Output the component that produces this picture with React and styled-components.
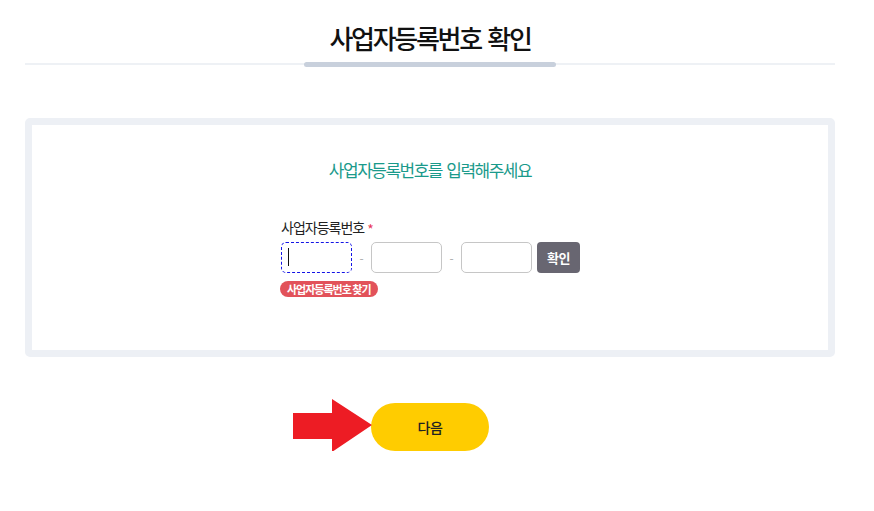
import React from "react";
import styled, { createGlobalStyle } from "styled-components";

const Global = createGlobalStyle`
  html, body { margin: 0; padding: 0; background: #fff; }
  body { font-family: "Noto Sans CJK KR", "Noto Sans", sans-serif; color: #222; }
  * { box-sizing: border-box; }
`;

const Page = styled.div`
  width: 874px;
  padding: 0 39px 0 25px;
`;

const TitleBlock = styled.header`
  display: flex;
  flex-direction: column;
  align-items: center;
  padding-top: 20px;
`;

const Title = styled.h1`
  margin: 0;
  font-size: 26px;
  line-height: 36px;
  font-weight: 500;
  letter-spacing: -2.3px;
  word-spacing: 3px;
  color: #111;
  height: 42px;
`;

const Rule = styled.div`
  width: 100%;
  height: 2px;
  margin-top: 1px;
  background: #eef1f5;
  display: flex;
  justify-content: center;
  align-items: center;
`;

const RuleAccent = styled.div`
  width: 252px;
  height: 5px;
  border-radius: 3px;
  background: #c8d0dc;
`;

const Card = styled.section`
  margin-top: 53px;
  height: 239px;
  border: 7px solid #edf0f5;
  border-radius: 5px;
  display: flex;
  flex-direction: column;
  align-items: center;
  padding-top: 32px;
`;

const Lead = styled.h2`
  margin: 0;
  font-size: 17px;
  line-height: 26px;
  font-weight: 400;
  letter-spacing: -1.5px;
  word-spacing: 2px;
  color: #1a9a8b;
`;

const Form = styled.div`
  margin-top: 33px;
  margin-left: 1px;
  display: flex;
  flex-direction: column;
  align-items: flex-start;
`;

const Label = styled.label`
  font-size: 14px;
  line-height: 18px;
  letter-spacing: -1px;
  color: #222;
  display: flex;
  align-items: center;
`;

const Req = styled.span`
  color: #e8395a;
  font-size: 14px;
  margin-left: 3px;
  margin-top: 4px;
  letter-spacing: 0;
`;

const Row = styled.div`
  margin-top: 4px;
  display: flex;
  align-items: center;
`;

const Field = styled.div`
  position: relative;
  width: 71px;
  height: 31px;
`;

const Input = styled.input`
  width: 100%;
  height: 100%;
  border-radius: 5px;
  border: 1px ${p => (p.$focused ? "dashed #1414e6" : "solid #c6c6c6")};
  outline: none;
  background: #fff;
  padding: 0 6px;
  font-size: 14px;
`;

const Caret = styled.span`
  position: absolute;
  left: 7px;
  top: 6px;
  width: 1px;
  height: 18px;
  background: #111;
`;

const Dash = styled.span`
  width: 19px;
  text-align: center;
  color: #aaa;
  font-size: 12px;
`;

const CheckButton = styled.button`
  margin-left: 5px;
  width: 43px;
  height: 31px;
  border: 0;
  border-radius: 4px;
  background: #686671;
  color: #fff;
  font-family: inherit;
  font-size: 13px;
  font-weight: 700;
  letter-spacing: -0.5px;
  padding: 0;
`;

const Badge = styled.button`
  margin-top: 8px;
  margin-left: -1px;
  height: 16px;
  padding: 0 7px;
  border: 0;
  border-radius: 8px;
  background: #e2525a;
  color: #fff;
  font-family: inherit;
  font-size: 11px;
  font-weight: 700;
  letter-spacing: -1px;
  line-height: 16px;
`;

const Footer = styled.div`
  margin-top: 46px;
  display: flex;
  justify-content: center;
`;

const NextWrap = styled.div`
  position: relative;
`;

const NextButton = styled.button`
  width: 118px;
  height: 48px;
  border: 0;
  border-radius: 24px;
  background: #ffcc00;
  color: #222;
  font-family: inherit;
  font-size: 14px;
  font-weight: 500;
  letter-spacing: -0.5px;
`;

const Arrow = styled.svg`
  position: absolute;
  left: -78px;
  top: -4px;
`;

export default function App() {
  return (
    <Page>
      <Global />
      <TitleBlock>
        <Title>사업자등록번호 확인</Title>
        <Rule>
          <RuleAccent />
        </Rule>
      </TitleBlock>
      <Card>
        <Lead>사업자등록번호를 입력해주세요</Lead>
        <Form>
          <Label>
            사업자등록번호<Req>*</Req>
          </Label>
          <Row>
            <Field>
              <Input $focused />
              <Caret />
            </Field>
            <Dash>-</Dash>
            <Field>
              <Input />
            </Field>
            <Dash>-</Dash>
            <Field>
              <Input />
            </Field>
            <CheckButton>확인</CheckButton>
          </Row>
          <Badge>사업자등록번호 찾기</Badge>
        </Form>
      </Card>
      <Footer>
        <NextWrap>
          <Arrow width="79" height="53" viewBox="0 0 79 53">
            <polygon points="0,14 39,14 39,0 79,26 39,53 39,40 0,40" fill="#ed1c24" />
          </Arrow>
          <NextButton>다음</NextButton>
        </NextWrap>
      </Footer>
    </Page>
  );
}
